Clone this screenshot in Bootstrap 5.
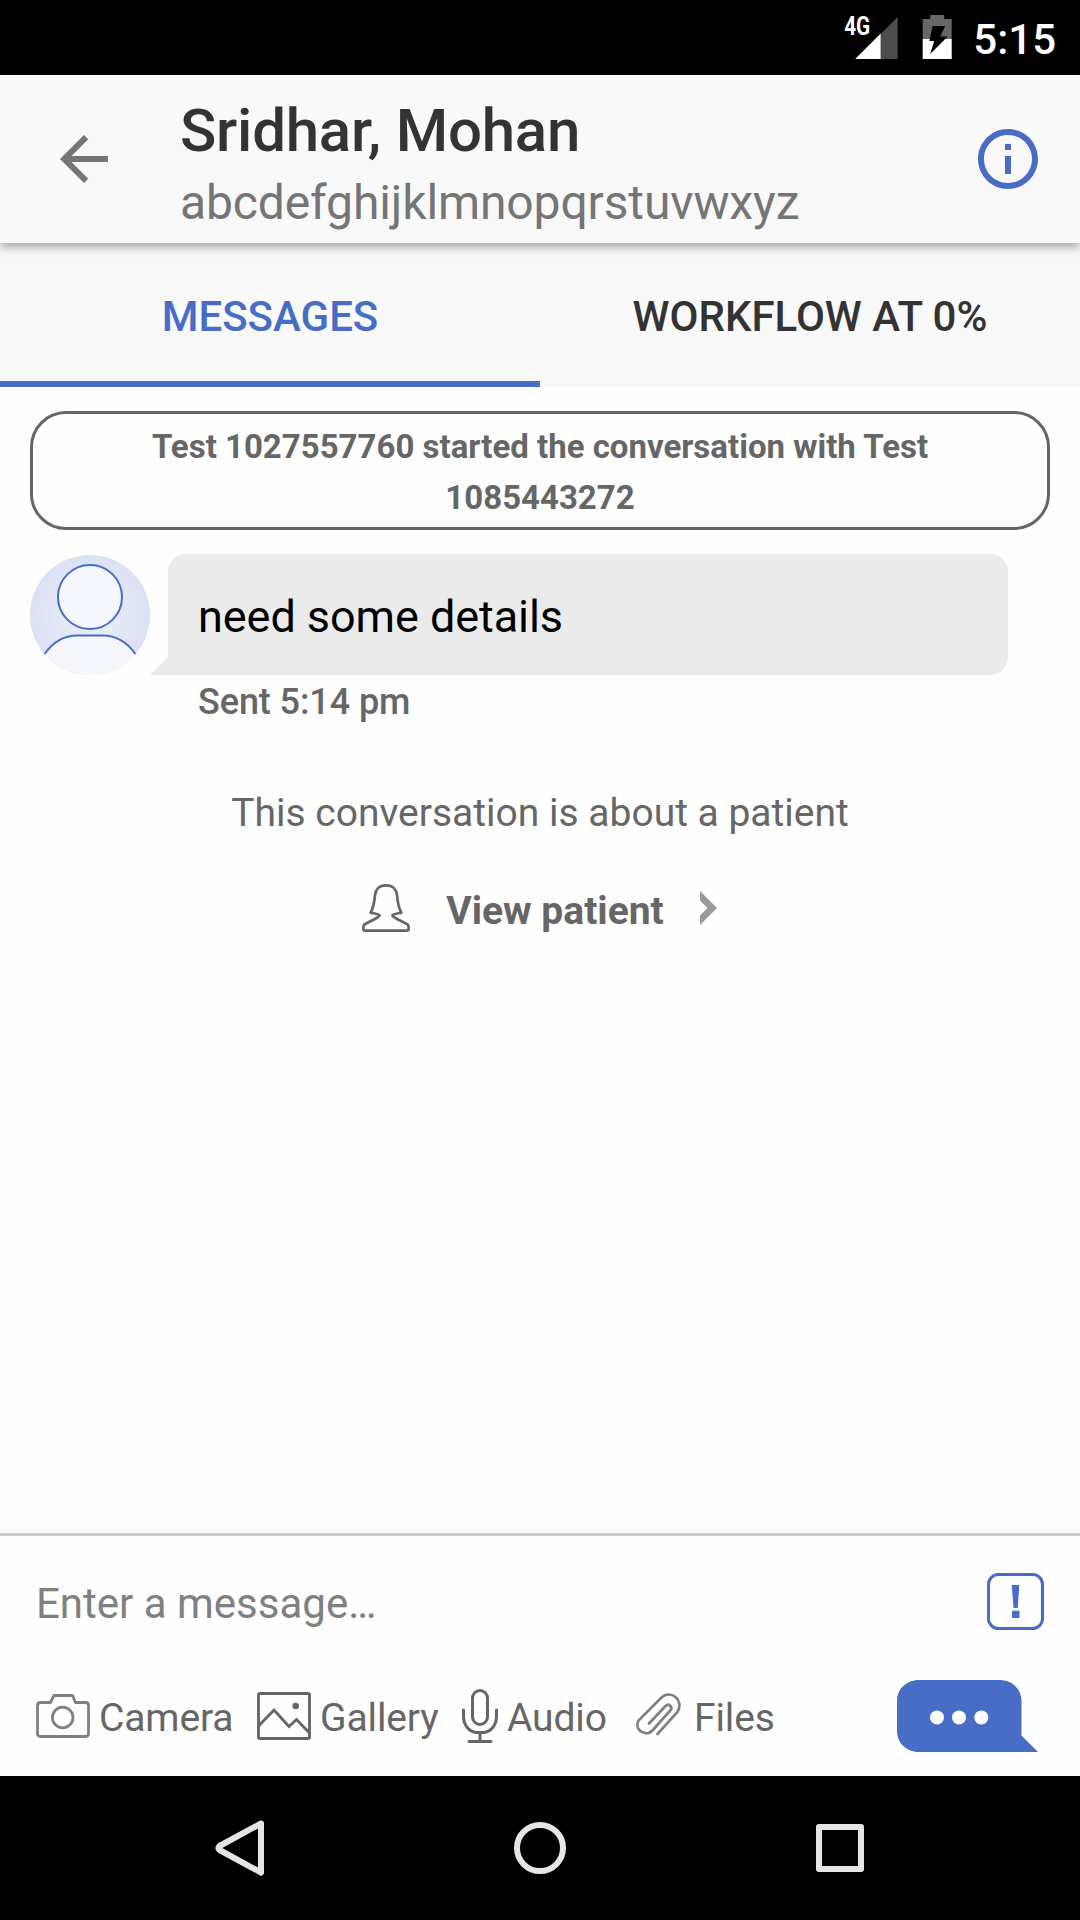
<!DOCTYPE html>
<html lang="en">
<head>
<meta charset="utf-8">
<meta name="viewport" content="width=device-width, initial-scale=1">
<title>Conversation</title>
<link href="https://cdn.jsdelivr.net/npm/bootstrap@5.3.0/dist/css/bootstrap.min.css" rel="stylesheet">
<style>
  :root { --brand: #486dc7; --ink: #333; --soft: #757575; --mute: #666; }
  body { font-family: Roboto, "Liberation Sans", sans-serif; width: 1080px; height: 1920px; overflow: hidden; background: #fefefe; }
  svg { display: block; flex: none; }
  .status-bar { height: 75px; padding-right: 24px; }
  .clock { font-size: 42px; line-height: 50px; font-weight: 500; padding-top: 15px; margin-left: 21px; }
  .app-bar { height: 168px; background: #f9f9f9; box-shadow: 0 4px 9px rgba(0,0,0,.34); z-index: 2; position: relative; }
  .app-bar .back { margin: 60px 0 0 60px; }
  .app-bar .heading { margin-left: 72px; padding-top: 16px; }
  .app-bar h1 { font-size: 60px; line-height: 80px; font-weight: 500; letter-spacing: -.23px; color: var(--ink); }
  .app-bar .sub { font-size: 48px; line-height: 64px; letter-spacing: -.12px; color: var(--soft); }
  .app-bar .about { margin: 54px 42px 0 auto; }
  .tab-strip { height: 144px; background: #f9f9f9; }
  .tab-strip .nav-link { height: 144px; padding: 44px 0 0; font-size: 42px; line-height: 60px; font-weight: 500; color: var(--ink); border-radius: 0; }
  .tab-strip .nav-link.active { color: var(--brand); border-bottom: 6px solid var(--brand); }
  .thread { padding: 24px 30px 0; }
  .notice { border: 3px solid var(--mute); border-radius: 36px; height: 119px; padding: 7px 90px 0; font-size: 33px; line-height: 51px; font-weight: 700; color: var(--mute); }
  .msg-row { margin-top: 24px; height: 121px; }
  .bubble { width: 840px; margin-left: 18px; padding: 4px 30px 0; font-size: 45px; line-height: 117px; letter-spacing: -.06px; color: #000; background: #ebebeb; border-radius: 18px 18px 18px 0; }
  .bubble::before { content: ""; position: absolute; left: -18px; bottom: 0; width: 18px; height: 18px; background: #ebebeb; clip-path: polygon(100% 0, 100% 100%, 0 100%); }
  .sent { margin: 2px 0 0 168px; font-size: 36px; line-height: 50px; font-weight: 500; letter-spacing: -.1px; color: var(--mute); }
  .topic { margin-top: 61px; font-size: 39px; line-height: 50px; color: var(--mute); }
  .view-patient { margin-top: 46px; gap: 36px; font-size: 39px; line-height: 54px; font-weight: 700; color: var(--mute); }
  .view-patient .person { margin-left: -1px; }
  .view-patient .chev { margin-top: 7px; }
  .composer { border-top: 3px solid #ccc; height: 243px; }
  .entry { height: 127px; padding: 0 36px; }
  .entry .hint { font-size: 42px; line-height: 60px; color: #808080; padding-top: 38px; }
  .entry svg { margin-top: 37px; }
  .tools { padding: 17px 42px 0 36px; height: 113px; }
  .tool { font-size: 39px; line-height: 60px; letter-spacing: -.12px; color: var(--mute); white-space: nowrap; }
  .tool span { padding-top: 8px; }
  .tool svg { margin-top: 6px; }
  .nav-keys { height: 144px; }
</style>
<script src="https://cdn.jsdelivr.net/npm/bootstrap@5.3.0/dist/js/bootstrap.bundle.min.js"></script>
</head>
<body class="d-flex flex-column">

<div class="status-bar bg-black text-white d-flex justify-content-end align-items-start">
  <svg width="110" height="75" viewBox="842.300 0 110 75">
    <text x="844.500" y="35" font-size="25.500" font-weight="700" fill="#fff" textLength="26" lengthAdjust="spacingAndGlyphs">4G</text>
    <path d="M881 34V59H898V17Z" fill="#4d4d4d"/>
    <path d="M855.500 59L881 33.500V59Z" fill="#fff"/>
    <path d="M930.500 15h14v4H952v20h-29V19h7.500Z" fill="#666"/>
    <path d="M923 39h29v20h-29Z" fill="#fff"/>
    <path d="M933 26h12.500l-5 10.500h7.500L930.500 54l4-13H929.500Z" fill="#000"/>
  </svg>
  <span class="clock">5:15</span>
</div>

<header class="app-bar d-flex align-items-start">
  <svg class="back" width="48" height="48" viewBox="4 4 16 16"><path fill="#757575" d="M20 11H7.830l5.590-5.590L12 4l-8 8 8 8 1.410-1.410L7.830 13H20v-2z"/></svg>
  <div class="heading">
    <h1 class="mb-0">Sridhar, Mohan</h1>
    <div class="sub">abcdefghijklmnopqrstuvwxyz</div>
  </div>
  <svg class="about" width="60" height="60" viewBox="2 2 20 20"><path fill="#486dc7" d="M11 17h2v-6h-2v6zm1-15C6.480 2 2 6.480 2 12s4.480 10 10 10 10-4.480 10-10S17.520 2 12 2zm0 18c-4.410 0-8-3.590-8-8s3.590-8 8-8 8 3.590 8 8-3.590 8-8 8zM11 9h2V7h-2v2z"/></svg>
</header>

<nav class="tab-strip nav nav-fill flex-nowrap">
  <a class="nav-link active w-50" href="#">MESSAGES</a>
  <a class="nav-link w-50" href="#">WORKFLOW AT 0%</a>
</nav>

<main class="thread flex-grow-1">
  <div class="notice text-center">Test 1027557760 started the conversation with Test 1085443272</div>

  <div class="msg-row d-flex">
    <svg width="120" height="121" viewBox="0 -1 120 121">
      <defs>
        <radialGradient id="halo"><stop offset="0" stop-color="#eef1fa"/><stop offset="1" stop-color="#dae1f3"/></radialGradient>
        <clipPath id="disc"><circle cx="60" cy="60" r="60"/></clipPath>
      </defs>
      <circle cx="60" cy="60" r="60" fill="url(#halo)"/>
      <g clip-path="url(#disc)">
        <path d="M14.500 99C24 86 36 80.500 47 80.500H73C84 80.500 96 86 105.500 99L120 120H0Z" fill="#f5f7fd"/>
      </g>
      <path d="M14.500 99C24 86 36 80.500 47 80.500H73C84 80.500 96 86 105.500 99" fill="none" stroke="#486dc7" stroke-width="2"/>
      <circle cx="60" cy="42" r="32" fill="#f5f7fd" stroke="#486dc7" stroke-width="2"/>
    </svg>
    <div class="bubble position-relative">need some details</div>
  </div>
  <div class="sent">Sent 5:14 pm</div>

  <div class="topic text-center">This conversation is about a patient</div>
  <div class="view-patient d-flex justify-content-center align-items-start">
    <svg class="person" width="48" height="48" viewBox="0 0 48 48" fill="none" stroke="#666" stroke-width="2.700" stroke-linejoin="round"><path d="M24 1.400C17 1.400 13.500 6 13 11C12.400 18 11.500 24 8.600 28.600C12 29.500 17 29.800 17.600 31.500C17 33.500 8 37.500 3.500 39.800C2 40.600 1.400 41.500 1.400 43V45.200C1.400 46.200 2 46.600 3 46.600H45C46 46.600 46.600 46.200 46.600 45.200V43C46.600 41.500 46 40.600 44.500 39.800C40 37.500 31 33.500 30.400 31.500C31 29.800 36 29.500 39.400 28.600C36.500 24 35.600 18 35 11C34.500 6 31 1.400 24 1.400Z"/></svg>
    <span>View patient</span>
    <svg class="chev" width="17" height="34" viewBox="0 0 17 34"><path d="M0 0L17 17L0 34V24.500L7.500 17L0 9.500Z" fill="#999"/></svg>
  </div>
</main>

<section class="composer">
  <div class="entry d-flex justify-content-between align-items-start">
    <span class="hint">Enter a message…</span>
    <svg width="57" height="57" viewBox="0 0 57 57"><rect x="1.500" y="1.500" width="54" height="54" rx="10" fill="none" stroke="#486dc7" stroke-width="3"/><path d="M24.700 12h7.600l-1.600 23h-4.200zM25 37.700h7.500V45H25z" fill="#486dc7"/></svg>
  </div>
  <div class="tools d-flex align-items-start">
    <div class="tool d-flex" style="width:221px">
      <svg class="me-2" width="55" height="60" viewBox="0 6 55 60" fill="none" stroke="#808080" stroke-width="2.800" stroke-linejoin="round"><path d="M4.500 22.500H14.500L18 15.500H36.500L39.500 22.500H49.500Q52.500 22.500 52.500 25.500V53.500Q52.500 56.500 49.500 56.500H4.500Q1.500 56.500 1.500 53.500V25.500Q1.500 22.500 4.500 22.500Z"/><circle cx="26.700" cy="37.500" r="10.300"/></svg>
      <span>Camera</span>
    </div>
    <div class="tool d-flex" style="width:205px">
      <svg class="me-2" width="55" height="60" viewBox="0 6 55 60" fill="none" stroke="#666" stroke-width="2.900"><rect x="1.500" y="13.500" width="51" height="45" rx="1.500"/><path d="M2 45.500L17 30L32 46.500L39.500 39.500L52.500 53"/><circle cx="38.700" cy="26" r="3.300" fill="#666" stroke="none"/></svg>
      <span>Gallery</span>
    </div>
    <div class="tool d-flex" style="width:174px">
      <svg class="me-2" width="37" height="60" viewBox="0 6 37 60" fill="none" stroke="#666" stroke-width="3" stroke-linecap="round"><rect x="10.500" y="10.500" width="15" height="34" rx="7.500"/><path d="M1.500 30V36C1.500 46 8 52.500 15 52.500H21C28 52.500 34.500 46 34.500 36V30M18 53V61M7 61.500H29"/></svg>
      <span>Audio</span>
    </div>
    <div class="tool d-flex" style="width:145px">
      <svg width="58" height="60" viewBox="0 6 58 60" fill="none" stroke="#808080" stroke-width="2.700" stroke-linecap="round"><path d="M13 43.500L29.500 26C33 22.800 37 27 34.300 30.500L16.500 50.500C10.500 57.500 -2.500 50 2.500 40.500L25.500 17.500C34.500 9 48.500 20 41.500 32L21.500 54"/></svg>
      <span>Files</span>
    </div>
    <svg class="ms-auto" width="141" height="72" viewBox="0 0 141 72"><path d="M22 0H103C115 0 124.500 9 124.500 21V55.500L141 72H22C9.500 72 0 63 0 51V21C0 9 9.500 0 22 0Z" fill="#486dc7"/><g fill="#fff"><circle cx="40" cy="37.500" r="7"/><circle cx="62" cy="37.500" r="7"/><circle cx="84.300" cy="37.500" r="7"/></g></svg>
  </div>
</section>

<footer class="nav-keys bg-black">
  <svg width="1080" height="144" viewBox="0 0 1080 144" fill="none" stroke="#e5e5e5" stroke-width="6" stroke-linejoin="round">
    <path d="M261 47.500L219.500 70Q217.500 72 219.500 74L261 96.500Z"/>
    <circle cx="540" cy="72" r="23"/>
    <rect x="819" y="51" width="42" height="42"/>
  </svg>
</footer>
</body>
</html>
